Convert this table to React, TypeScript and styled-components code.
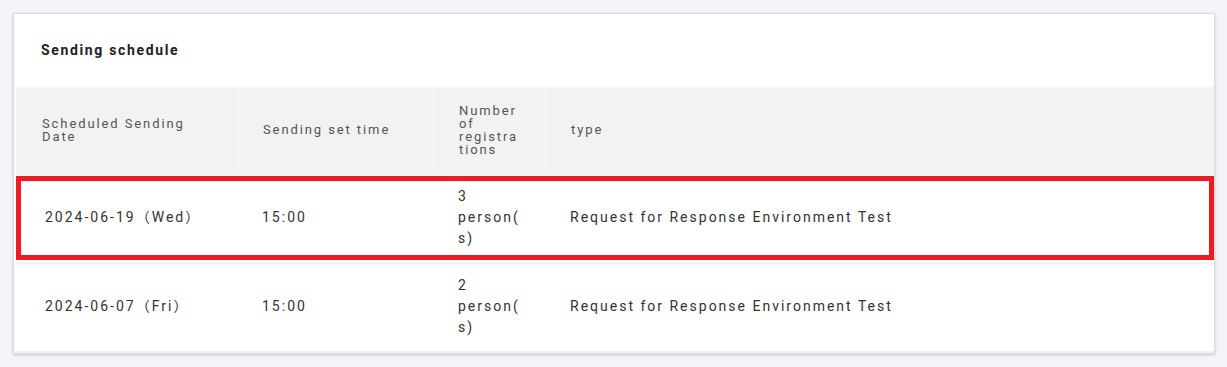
import styled, { createGlobalStyle } from 'styled-components';

const GlobalStyle = createGlobalStyle`
  body {
    margin: 0;
    padding: 13px 12px 13px 13px;
    background: #f4f5f9;
    font-family: Roboto, "Noto Sans CJK JP", sans-serif;
  }
`;

const Card = styled.section`
  background: #fff;
  border: 1px solid #dcdcdc;
  box-shadow: 0 1px 3px rgba(0, 0, 0, 0.18);
  padding-left: 2px;
`;

const Title = styled.h2`
  margin: 0;
  height: 72px;
  display: flex;
  align-items: center;
  padding-left: 25px;
  font-size: 14px;
  font-weight: 700;
  letter-spacing: 1.65px;
  color: #222;
`;

const Row = styled.div<{ $head?: boolean; $highlight?: boolean }>`
  position: relative;
  display: grid;
  grid-template-columns: 221px 196px 113px 1fr;
  background: ${p => (p.$head ? '#f2f2f2' : '#fff')};
  border-top: ${p => (p.$head ? '2px solid #f7f7f7' : 'none')};
  border-bottom: ${p => (p.$head ? 'none' : '2px solid #f1f1f1')};
  min-height: 87px;

  &::after {
    content: '';
    display: ${p => (p.$highlight ? 'block' : 'none')};
    position: absolute;
    top: 1px;
    left: 0;
    right: 0;
    bottom: 2px;
    border: 5px solid #ed1c24;
    pointer-events: none;
  }
`;

const Cell = styled.div<{ $head?: boolean; $first?: boolean; $last?: boolean }>`
  display: flex;
  align-items: center;
  padding: ${p => (p.$head ? '0 25px 4px' : '0 25px 3px')};
  padding-left: ${p => (p.$first ? (p.$head ? '26px' : '29px') : p.$last ? '24px' : '25px')};
  border-left: ${p => (p.$head && !p.$first ? '1px solid #f7f7f7' : 'none')};
  font-size: ${p => (p.$head ? '13px' : '14px')};
  line-height: ${p => (p.$head ? '13px' : '21px')};
  letter-spacing: ${p => (p.$head ? '1.9px' : '2px')};
  color: ${p => (p.$head ? '#555' : '#333')};
  overflow-wrap: anywhere;
  min-width: 0;
`;

const rows = [
  { date: '2024-06-19（Wed）', time: '15:00', count: '3 person(s)', type: 'Request for Response Environment Test', highlight: true },
  { date: '2024-06-07（Fri）', time: '15:00', count: '2 person(s)', type: 'Request for Response Environment Test' },
];

export default function App() {
  return (
    <>
      <GlobalStyle />
      <Card>
        <Title>Sending schedule</Title>
        <Row $head>
          <Cell $head $first>Scheduled Sending Date</Cell>
          <Cell $head>Sending set time</Cell>
          <Cell $head>Number of registrations</Cell>
          <Cell $head $last>type</Cell>
        </Row>
        {rows.map(r => (
          <Row key={r.date} $highlight={r.highlight}>
            <Cell $first>{r.date}</Cell>
            <Cell>{r.time}</Cell>
            <Cell>{r.count}</Cell>
            <Cell $last>{r.type}</Cell>
          </Row>
        ))}
      </Card>
    </>
  );
}
